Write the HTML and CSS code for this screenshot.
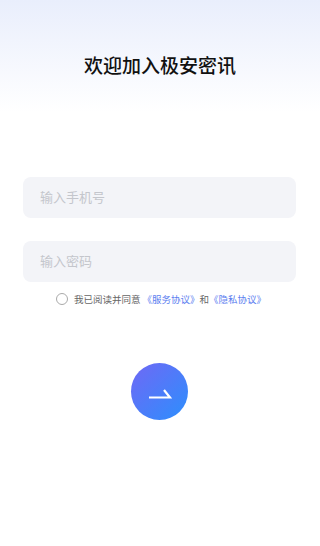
FILE: index.html
```html
<!DOCTYPE html>
<html lang="zh-CN">
<head>
	<meta charset="UTF-8">
	<title>登录</title>
	<link rel="stylesheet" href="styles.css">
</head>
<body>
	<section class="page">
		<header class="head">
			<h1>欢迎加入极安密讯</h1>
		</header>
		<div class="form">
			<div class="field"><input type="text" placeholder="输入手机号"></div>
			<div class="field"><input type="password" placeholder="输入密码"></div>
			<div class="agree">
				<span class="check"></span>
				<span>我已阅读并同意 <a href="javascript:;">《服务协议》</a>和<a href="javascript:;">《隐私协议》</a></span>
			</div>
		</div>
		<a href="javascript:;" class="go">
			<svg width="24" height="14" viewBox="0 0 24 14">
				<path d="M1 10.5 H22 L16 3" fill="none" stroke="#fff" stroke-width="2.2" stroke-linejoin="miter"/>
			</svg>
		</a>
	</section>
</body>
</html>
```
FILE: styles.css
```css
*{
	box-sizing: border-box;
}
a{
	text-decoration: none;
}
body{
	margin: 0;
	background: #fff;
	font-family: "Noto Sans CJK SC", "Noto Sans", sans-serif;
}
	.page{
		width: 320px;
		height: 546px;
		overflow: hidden;
	}
	.head{
		height: 112px;
		padding-top: 50px;
		background: linear-gradient(#e9eefc, #fff);
		text-align: center;
	}
	.head h1{
		margin: 0;
		font-size: 19px;
		line-height: 30px;
		font-weight: 500;
		color: #111;
	}
	.form{
		padding: 65px 24px 0 23px;
	}
	.field{
		height: 41px;
		border-radius: 8px;
		background-color: #f3f4f8;
		margin-bottom: 23px;
	}
	.field input{
		width: 100%;
		height: 100%;
		border: none;
		outline: none;
		background: transparent;
		padding: 0 17px 2px;
		font-family: inherit;
		font-size: 13px;
		color: #333;
	}
	.field input::placeholder{
		color: #c4c6cc;
	}
	.agree{
		display: flex;
		align-items: center;
		justify-content: center;
		margin-top: -14px;
		height: 16px;
		font-size: 9.5px;
		color: #666;
		padding-left: 3px;
	}
	.check{
		width: 12px;
		height: 12px;
		border: 1px solid #aaa;
		border-radius: 50%;
		margin-right: 6px;
	}
	.agree a{
		color: #5b7ef0;
	}
	.go{
		display: flex;
		align-items: center;
		justify-content: center;
		width: 57px;
		height: 57px;
		border-radius: 50%;
		margin: 56px 0 0 131px;
		background: linear-gradient(135deg, #7068f5, #2c8ffd);
	}
	.go svg{
		margin-top: 4px;
		margin-left: 1px;
	}
```
